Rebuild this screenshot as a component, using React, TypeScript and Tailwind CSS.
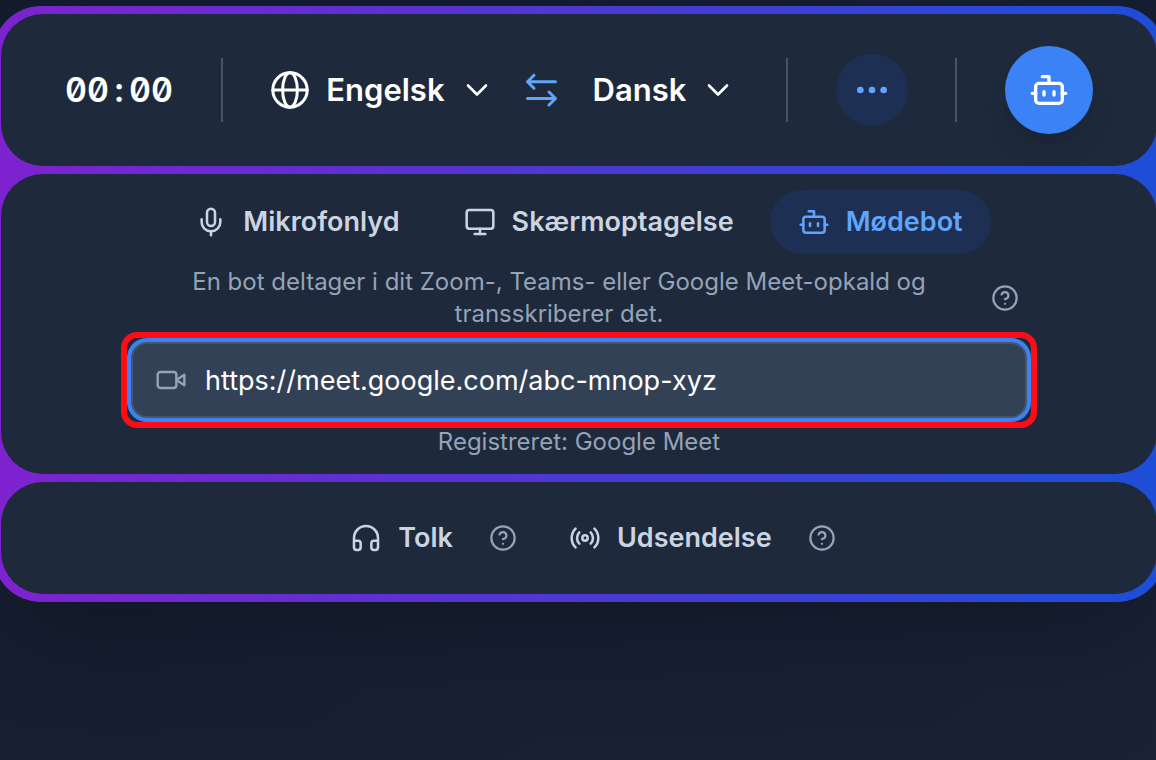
import React, { useState } from "react";
import {
  Bot,
  ChevronDown,
  CircleQuestionMark,
  Ellipsis,
  Headphones,
  Mic,
  Monitor,
  Radio,
  type LucideIcon,
} from "lucide-react";

type Source = "mic" | "screen" | "bot";

const LANGUAGES = ["Engelsk", "Dansk", "Tysk", "Fransk"];

const SOURCES: { id: Source; label: string; icon: LucideIcon }[] = [
  { id: "mic", label: "Mikrofonlyd", icon: Mic },
  { id: "screen", label: "Skærmoptagelse", icon: Monitor },
  { id: "bot", label: "Mødebot", icon: Bot },
];

const SwapIcon: React.FC = () => (
  <svg
    viewBox="0 0 40 40"
    className="size-10"
    fill="none"
    stroke="currentColor"
    strokeWidth="3"
    strokeLinecap="round"
    strokeLinejoin="round"
    aria-hidden="true"
  >
    <path d="M34.5 11.7H6.5M13 5.2L6.5 11.7L13 18.2" />
    <path d="M6.5 28.5H34.5M28 22L34.5 28.5L28 35" />
  </svg>
);

// meridians are a plain ellipse, so the equator stays the only straight line
const GlobeIcon: React.FC = () => (
  <svg
    viewBox="0 0 40 40"
    className="mr-4 size-10"
    fill="none"
    stroke="currentColor"
    strokeWidth="3"
    strokeLinecap="round"
    aria-hidden="true"
  >
    <circle cx="20" cy="20" r="17.2" />
    <ellipse cx="20" cy="20" rx="7.4" ry="17.2" />
    <path d="M2.8 20H37.2" />
  </svg>
);

const CameraIcon: React.FC = () => (
  <svg
    viewBox="0 0 24 24"
    className="pointer-events-none absolute top-[22px] left-6 size-8 text-[#94a3b8]"
    fill="none"
    stroke="currentColor"
    strokeWidth="1.8"
    strokeLinecap="round"
    strokeLinejoin="round"
    aria-hidden="true"
  >
    <path d="m22 8-6 4 6 4V8Z" />
    <rect width="14" height="12" x="2" y="6" rx="2" />
  </svg>
);

const Divider: React.FC = () => <div className="h-16 w-0.5 shrink-0 bg-[#475569]" />;

const HelpButton: React.FC<{ label: string }> = ({ label }) => (
  <button aria-label={label} className="shrink-0 text-[#94a3b8] hover:text-slate-200">
    <CircleQuestionMark className="size-7" strokeWidth={1.9} />
  </button>
);

interface LanguageSelectProps {
  label: string;
  value: string;
  onChange: (value: string) => void;
}

const LanguageSelect: React.FC<LanguageSelectProps> = ({ label, value, onChange }) => (
  <div className="relative flex items-center">
    <select
      aria-label={label}
      value={value}
      onChange={(e) => onChange(e.target.value)}
      className="field-sizing-content cursor-pointer appearance-none pr-13 text-[31px] leading-10 font-semibold text-white outline-none"
    >
      {LANGUAGES.map((language) => (
        <option key={language}>{language}</option>
      ))}
    </select>
    <ChevronDown
      className="pointer-events-none absolute right-0.5 size-9 text-white"
      strokeWidth={1.75}
    />
  </div>
);

const Panel: React.FC<{ className?: string; children: React.ReactNode }> = ({
  className = "",
  children,
}) => <section className={`rounded-[42px] bg-[#1e293b] ${className}`}>{children}</section>;

export default function App() {
  const [from, setFrom] = useState("Engelsk");
  const [to, setTo] = useState("Dansk");
  const [source, setSource] = useState<Source>("bot");
  const [url, setUrl] = useState("https://meet.google.com/abc-mnop-xyz");

  const swap = () => {
    setFrom(to);
    setTo(from);
  };

  return (
    <main className="min-h-screen overflow-hidden bg-linear-to-br from-[#131c2d] to-[#192135] pt-1.5 font-['Inter',sans-serif]">
      <div className="-mr-[9px] -ml-[7px] flex flex-col gap-2 rounded-[48px] bg-linear-to-r/srgb from-[#7e22ce] to-[#1d4ed8] p-2 shadow-[0_50px_100px_-24px_rgba(0,0,0,0.25)]">
        <Panel className="flex items-center justify-between px-16 py-8">
          <time className="flex text-[34px] leading-10 font-semibold text-white slashed-zero tabular-nums">
            <span>00</span>
            <span className="w-5 text-center">:</span>
            <span>00</span>
          </time>
          <Divider />
          <div className="flex items-center text-white">
            <GlobeIcon />
            <LanguageSelect label="Fra sprog" value={from} onChange={setFrom} />
            <button onClick={swap} aria-label="Byt sprog" className="mr-8 ml-6 text-[#60a5fa]">
              <SwapIcon />
            </button>
            <LanguageSelect label="Til sprog" value={to} onChange={setTo} />
          </div>
          <Divider />
          <button
            aria-label="Flere indstillinger"
            className="flex size-18 items-center justify-center rounded-full bg-[#1d2f52] text-[#60a5fa]"
          >
            <Ellipsis className="size-10" />
          </button>
          <Divider />
          <button
            aria-label="Start mødebot"
            className="flex size-22 items-center justify-center rounded-full bg-[#3b82f6] text-white shadow-[0_20px_30px_-6px_rgba(0,0,0,0.1),0_8px_12px_-8px_rgba(0,0,0,0.1)]"
          >
            <Bot className="size-10" />
          </button>
        </Panel>

        <Panel className="flex flex-col items-center py-4">
          <div role="tablist" className="flex gap-2">
            {SOURCES.map(({ id, label, icon: Icon }) => (
              <button
                key={id}
                role="tab"
                aria-selected={source === id}
                onClick={() => setSource(id)}
                className={`flex h-16 items-center gap-4 rounded-full px-7 text-[27px] font-semibold ${
                  source === id ? "bg-[#1d2f52] text-[#60a5fa]" : "text-[#cbd5e1]"
                }`}
              >
                <Icon className="size-8" strokeWidth={1.9} />
                {label}
              </button>
            ))}
          </div>

          <div className="w-full max-w-[896px]">
            <div className="my-3 flex items-center gap-1 pr-2">
              <p className="flex-1 text-center text-2xl text-[#94a3b8]">
                En bot deltager i dit Zoom-, Teams- eller Google Meet-opkald og transskriberer det.
              </p>
              <HelpButton label="Hjælp til mødebot" />
            </div>

            <div className="relative">
              <input
                type="url"
                aria-label="Mødelink"
                value={url}
                onChange={(e) => setUrl(e.target.value)}
                className="block h-19 w-full rounded-2xl border-2 border-[#475569] bg-[#334157] pr-6 pl-18 text-[27px] text-white ring-4 ring-[#3b82f6] outline-none"
              />
              <CameraIcon />
              <div className="pointer-events-none absolute -inset-2.5 rounded-2xl border-6 border-[#ff0d17]" />
            </div>

            <p className="mt-2 text-center text-2xl text-[#94a3b8]">Registreret: Google Meet</p>
          </div>
        </Panel>

        <Panel className="flex items-center justify-center gap-6 py-6">
          <div className="flex items-center gap-2">
            <button className="flex h-16 items-center gap-4 px-7 text-[27px] font-semibold text-[#cbd5e1]">
              <Headphones className="size-8" strokeWidth={1.9} />
              Tolk
            </button>
            <HelpButton label="Hjælp til tolk" />
          </div>
          <div className="flex items-center gap-2">
            <button className="flex h-16 items-center gap-4 px-7 text-[27px] font-semibold text-[#cbd5e1]">
              <Radio className="size-8" strokeWidth={1.9} />
              Udsendelse
            </button>
            <HelpButton label="Hjælp til udsendelse" />
          </div>
        </Panel>
      </div>
    </main>
  );
}
